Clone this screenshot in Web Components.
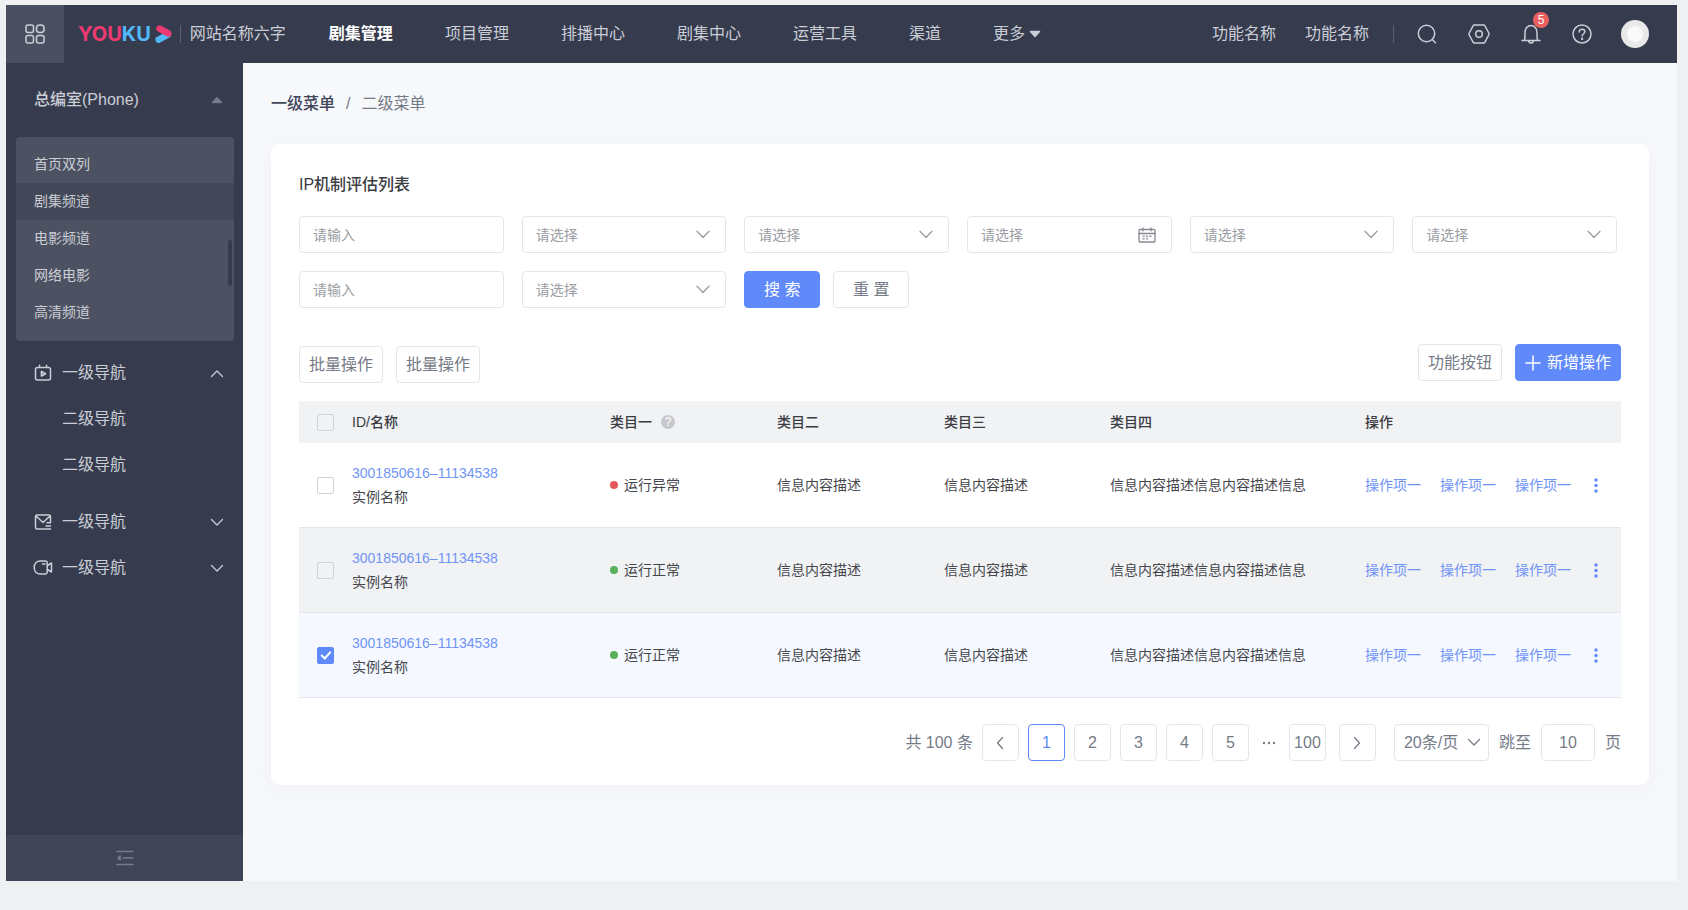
<!DOCTYPE html>
<html lang="zh-CN">
<head>
<meta charset="utf-8">
<meta name="viewport" content="width=device-width, initial-scale=1">
<title>IP机制评估列表</title>
<style>
  :root {
    --dark: #363b4e;
    --ink: #45474d;
    --muted: #767b88;
    --hint: #9b9da4;
    --line: #e4e6ed;
    --blue: #608afa;
    --link: #7094f6;
    --fill: #f1f2f4;
    --on-dark: #cbced6;
  }
  body {
    margin: 0;
    background: #eef0f2;
    color: var(--ink);
    font: 16px/24px "Liberation Sans", "Noto Sans CJK SC", sans-serif;
  }
</style>
</head>
<body>
<yk-app></yk-app>

<script>
const define = (name, html, setup) => {
  const tpl = document.createElement('template');
  tpl.innerHTML = html;
  customElements.define(name, class extends HTMLElement {
    connectedCallback() {
      if (this.shadowRoot) return;
      this.attachShadow({ mode: 'open' }).append(tpl.content.cloneNode(true));
      if (setup) setup(this, this.shadowRoot);
    }
  });
};

const ICONS = {
  apps: [20, 20, '<rect x="1" y="1" width="7.5" height="7.5" rx="2"/><rect x="11.5" y="1" width="7.5" height="7.5" rx="3"/><rect x="1" y="11.5" width="7.5" height="7.5" rx="2"/><rect x="11.5" y="11.5" width="7.5" height="7.5" rx="2"/>'],
  play: [18, 18, '<path d="M3.6 14.6 12.5 10" stroke="#52b9f9" stroke-width="6.400"/><path d="M4.600 3.600 13.200 8.300" stroke="#ee3a72" stroke-width="6.600"/>'],
  search: [20, 20, '<circle cx="9.5" cy="9.5" r="8.2"/><path d="m15.5 15.8 3 3"/>'],
  hex: [22, 20, '<path d="M6.2 1h9.6c.5 0 .8.2 1 .6l4 7.4c.3.6.3 1.300 0 2l-4 7.400c-.2.4-.5.600-1 .600H6.200c-.5 0-.8-.2-1-.600l-4-7.400a2 2 0 0 1 0-2l4-7.400c.2-.4.5-.600 1-.600Z"/><circle cx="11" cy="10" r="3.300"/>'],
  bell: [20, 20, '<path d="M1 16.500h18M3.500 16.500c.6-2 .5-4.500.5-8C4 4.500 6.500 1.500 10 1.500s6 3 6 7c0 3.500-.1 6 .5 8M7.500 17c.4 1.400 1.300 2 2.500 2s2.100-.6 2.500-2"/>'],
  help: [20, 20, '<circle cx="10" cy="10" r="9"/><path d="M7.200 8c0-1.700 1.200-2.800 2.800-2.800s2.800 1 2.800 2.500c0 2-2.600 2.200-2.600 4.400"/><circle cx="10.100" cy="14.700" r=".5" fill="currentColor"/>'],
  tri: [12, 8, '<path d="M1.500 1.500h9L6 6.500Z" fill="currentColor"/>'],
  triUp: [12, 8, '<path d="M1.500 6.500h9L6 1.800Z" fill="currentColor"/>'],
  down: [14, 9, '<path d="M1 1.200 7 7.500l6-6.300"/>'],
  up: [14, 9, '<path d="M1.500 7.500 7 2l5.500 5.500"/>'],
  navDown: [14, 9, '<path d="M1.500 1.500 7 7l5.500-5.500"/>'],
  left: [10, 14, '<path d="M7.500 1.500 2.500 7l5 5.500"/>'],
  right: [10, 14, '<path d="m2.500 1.500 5 5.500-5 5.500"/>'],
  tv: [18, 18, '<rect x="1.500" y="3.500" width="15" height="12.500" rx="2"/><path d="M5.500 1.200v2M12.500 1.200v2"/><path d="M7.500 7.500v4.500l4-2.200Z" stroke-width="1.700"/>'],
  mail: [18, 18, '<path d="M16.500 9V3.500a1.500 1.500 0 0 0-1.500-1.500H3a1.500 1.500 0 0 0-1.500 1.500v11A1.500 1.500 0 0 0 3 16h13.500M2 3l7 6.500L16 3M13 9.800h3.500M12 13h4.500"/>'],
  cam: [20, 18, '<path d="M12.500 2H7.500C3.500 2 1.200 4.800 1.200 8.500S3.500 15 7.500 15h5c1 0 1.700-.7 1.700-1.700V3.700c0-1-.7-1.700-1.700-1.700ZM14.500 6.500l4-2.500v9l-4-2.500M9.500 5h2.500"/>'],
  fold: [18, 18, '<path d="M1 2.500h16M7 9h10M1 15.500h16"/><path d="M4 6.800 1.500 9 4 11.200Z" fill="currentColor" stroke-width="1"/>'],
  cal: [18, 16, '<rect x="1" y="2.500" width="16" height="12.500" rx="1"/><path d="M1 6.500h16M5 .8v3M13 .8v3"/><path d="M5 9.200h1.200M8.400 9.200h1.200M11.800 9.200H13M5 11.800h1.200M8.400 11.800h1.200" />'],
  plus: [16, 16, '<path d="M8 1v14M1 8h14"/>'],
  more: [4, 16, '<g fill="currentColor" stroke="none"><circle cx="2" cy="3" r="1.700"/><circle cx="2" cy="8.500" r="1.700"/><circle cx="2" cy="14" r="1.700"/></g>'],
  dots: [14, 4, '<g fill="currentColor" stroke="none"><circle cx="2" cy="2" r="1.200"/><circle cx="7" cy="2" r="1.200"/><circle cx="12" cy="2" r="1.200"/></g>']
};

define('yk-icon', `<style>:host{display:inline-flex;flex:none}svg{display:block}</style>`, (host, root) => {
  const [w, h, body] = ICONS[host.getAttribute('name')];
  const sw = host.getAttribute('weight') || '1.5';
  root.innerHTML += `<svg width="${w}" height="${h}" viewBox="0 0 ${w} ${h}" fill="none" stroke="currentColor" stroke-width="${sw}" stroke-linecap="round" stroke-linejoin="round" aria-hidden="true">${body}</svg>`;
});

define('yk-button', `
<style>
  :host { display: inline-flex; }
  button {
    flex: 1; display: flex; align-items: center; justify-content: center; gap: 6px;
    height: 37px; padding: 0 9px; margin: 0; box-sizing: border-box;
    border: 1px solid var(--line); border-radius: 4px; background: #fff;
    color: var(--muted); font: inherit; white-space: nowrap; cursor: pointer;
  }
  :host([primary]) button { background: var(--blue); border-color: var(--blue); color: #fff; }
  :host([wide]) button { padding: 0 18px; }
</style>
<button type="button"><slot></slot></button>`);

define('yk-field', `
<style>
  :host { display: block; position: relative; color: var(--hint); font-size: 14px; }
  input, select {
    display: block; width: 100%; height: 37px; box-sizing: border-box; margin: 0; padding: 0 40px 0 13px;
    border: 1px solid var(--line); border-radius: 4px; background: #fff; outline: none;
    color: inherit; font: inherit; appearance: none;
  }
  input::placeholder { color: inherit; opacity: 1; }
  yk-icon { position: absolute; right: 16px; top: 0; height: 37px; align-items: center; pointer-events: none; }
</style>`, (host, root) => {
  const kind = host.getAttribute('kind');
  const label = host.getAttribute('label');
  const hint = kind === 'text' ? '请输入' : '请选择';
  const holder = document.createElement('template');
  holder.innerHTML = kind === 'select'
    ? `<select aria-label="${label}"><option>${hint}</option></select><yk-icon name="down" weight="1.300"></yk-icon>`
    : `<input type="text" aria-label="${label}" placeholder="${hint}">` +
      (kind === 'date' ? '<yk-icon name="cal" weight="1.300" style="color:#868994"></yk-icon>' : '');
  root.append(holder.content);
});

define('yk-header', `
<style>
  :host { display: flex; align-items: center; height: 58px; background: var(--dark); color: var(--on-dark); white-space: nowrap; }
  a { color: inherit; text-decoration: none; }
  button { all: unset; display: flex; cursor: pointer; position: relative; }
  .apps { width: 58px; height: 58px; background: #4a5061; align-items: center; justify-content: center; flex: none; }
  .logo { display: flex; align-items: center; gap: 4px; margin-left: 14px; font: 700 20px/24px Inter, sans-serif; color: #ee3a72; }
  .logo b { font-weight: inherit; color: #52b9f9; }
  .bar { width: 1px; height: 18px; background: #5b6070; }
  .bar.first { margin: 0 9px 0 7px; }
  nav { display: flex; gap: 52px; margin-left: 43px; flex: 1; }
  nav a { display: flex; align-items: center; gap: 4px; }
  nav .on { color: #fff; font-weight: 700; }
  .tools { display: flex; align-items: center; gap: 29px; margin-right: 28px; }
  .icons { display: flex; align-items: center; gap: 31px; margin-left: -1px; }
  .tools .bar { margin: 0 -5px; }
  .badge {
    position: absolute; left: 12px; top: -12px; width: 16px; height: 16px; border-radius: 50%;
    background: #ea6060; color: #fff; font-size: 12px; line-height: 16px; text-align: center;
  }
  .me { width: 28px; height: 28px; border-radius: 50%; background: radial-gradient(circle, #fafafa 0 7px, #e9e9ea 9px 100%); }
</style>
<button class="apps" type="button" aria-label="应用"><yk-icon name="apps"></yk-icon></button>
<a class="logo" href="#"><span>YOU<b>KU</b></span><yk-icon name="play"></yk-icon></a>
<span class="bar first"></span>
<span>网站名称六字</span>
<nav>
  <a class="on" href="#">剧集管理</a><a href="#">项目管理</a><a href="#">排播中心</a><a href="#">剧集中心</a>
  <a href="#">运营工具</a><a href="#">渠道</a><a href="#">更多<yk-icon name="tri"></yk-icon></a>
</nav>
<div class="tools">
  <a href="#">功能名称</a><a href="#">功能名称</a>
  <span class="bar"></span>
  <div class="icons">
    <button type="button" aria-label="搜索"><yk-icon name="search"></yk-icon></button>
    <button type="button" aria-label="设置"><yk-icon name="hex"></yk-icon></button>
    <button type="button" aria-label="通知"><yk-icon name="bell"></yk-icon><span class="badge">5</span></button>
    <button type="button" aria-label="帮助"><yk-icon name="help"></yk-icon></button>
  </div>
  <button class="me" type="button" aria-label="账号"></button>
</div>`);

define('yk-nav-item', `
<style>
  :host { display: block; }
  a { display: flex; align-items: center; height: 46px; padding: 0 19px 0 28px; color: inherit; text-decoration: none; }
  .icon { width: 20px; display: flex; justify-content: center; margin: 0 8px 0 -1px; }
  .text { flex: 1; margin-left: 1px; }
  :host([sub]) .text { margin-left: 28px; }
</style>
<a href="#"></a>`, (host, root) => {
  const icon = host.getAttribute('icon'), arrow = host.getAttribute('arrow');
  root.querySelector('a').innerHTML =
    (icon ? `<span class="icon"><yk-icon name="${icon}"></yk-icon></span>` : '') +
    '<span class="text"><slot></slot></span>' +
    (arrow ? `<yk-icon name="${arrow}" weight="1.300"></yk-icon>` : '');
});

define('yk-sidebar', `
<style>
  :host { display: flex; flex-direction: column; background: var(--dark); color: var(--on-dark); }
  .head { all: unset; display: flex; align-items: center; justify-content: space-between; height: 74px; padding: 0 20px 0 28px; font-weight: 500; cursor: pointer; }
  .head yk-icon { color: #767b8b; }
  .list { position: relative; margin: 0 9px 9px 10px; padding: 9px 0 10px; border-radius: 4px; background: #4d5262; font-size: 14px; }
  .list a { display: block; padding-left: 18px; line-height: 37px; color: inherit; text-decoration: none; }
  .list a.on { background: #434858; }
  .thumb { position: absolute; right: 2px; top: 103px; width: 4px; height: 46px; border-radius: 2px; background: #363b4e; }
  nav { flex: 1; }
  .group { margin-bottom: 11px; }
  .fold { all: unset; display: flex; align-items: center; justify-content: center; height: 46px; background: #404457; color: #777c8c; cursor: pointer; }
</style>
<button class="head" type="button">总编室(Phone)<yk-icon name="triUp"></yk-icon></button>
<div class="list">
  <a href="#">首页双列</a><a class="on" href="#">剧集频道</a><a href="#">电影频道</a><a href="#">网络电影</a><a href="#">高清频道</a>
  <span class="thumb"></span>
</div>
<nav>
  <div class="group">
    <yk-nav-item icon="tv" arrow="up">一级导航</yk-nav-item>
    <yk-nav-item sub>二级导航</yk-nav-item>
    <yk-nav-item sub>二级导航</yk-nav-item>
  </div>
  <yk-nav-item icon="mail" arrow="navDown">一级导航</yk-nav-item>
  <yk-nav-item icon="cam" arrow="navDown">一级导航</yk-nav-item>
</nav>
<button class="fold" type="button" aria-label="收起导航"><yk-icon name="fold"></yk-icon></button>`);

define('yk-check', `
<style>
  :host { display: block; width: 17px; height: 17px; }
  input {
    appearance: none; display: block; position: relative; width: 17px; height: 17px; margin: 0; box-sizing: border-box;
    border: 1px solid #d0d2da; border-radius: 2px; background: transparent;
  }
  input:checked { background: var(--blue); border-color: var(--blue); }
  input:checked::after {
    content: ""; position: absolute; left: 5px; top: 1px; width: 4px; height: 8px;
    border: solid #fff; border-width: 0 2px 2px 0; transform: rotate(42deg);
  }
</style>
<input type="checkbox">`, (host, root) => {
  const box = root.querySelector('input');
  box.checked = host.hasAttribute('checked');
  box.setAttribute('aria-label', host.getAttribute('label'));
});

define('yk-table', `
<style>
  :host { display: block; font-size: 14px; }
  table { width: 100%; table-layout: fixed; border-collapse: separate; border-spacing: 0; }
  th { height: 42px; padding: 0; background: var(--fill); text-align: left; font-weight: 500; color: #3a3c42; }
  td { height: 84px; padding: 0; border-bottom: 1px solid var(--line); white-space: nowrap; }
  tr.hover td { background: var(--fill); }
  tr.picked td { background: #f5f9ff; }
  th:first-child, td:first-child { padding-left: 18px; }
  a { color: var(--link); text-decoration: none; }
  .id { display: block; }
  .q { display: inline-block; width: 14px; height: 14px; margin-left: 9px; border-radius: 50%; background: #c6c8cc; color: #fff; font-size: 12px; line-height: 14px; text-align: center; vertical-align: 1px; }
  .state { display: flex; align-items: center; gap: 6px; }
  .state::before { content: ""; width: 8px; height: 8px; border-radius: 50%; background: #59b15c; }
  .state.bad::before { background: #e4585b; }
  .ops { display: flex; align-items: center; gap: 19px; }
  .ops button { all: unset; display: flex; color: var(--blue); margin-left: 4px; cursor: pointer; }
</style>
<table>
  <colgroup>
    <col style="width:53px"><col style="width:258px"><col style="width:167px"><col style="width:167px">
    <col style="width:166px"><col style="width:255px"><col style="width:256px">
  </colgroup>
  <thead><tr>
    <th><yk-check label="全选"></yk-check></th><th>ID/名称</th><th>类目一<span class="q">?</span></th>
    <th>类目二</th><th>类目三</th><th>类目四</th><th>操作</th>
  </tr></thead>
  <tbody></tbody>
</table>`, (host, root) => {
  const rows = [
    { state: '运行异常', bad: true, cls: '' },
    { state: '运行正常', cls: 'hover' },
    { state: '运行正常', cls: 'picked' }
  ];
  root.querySelector('tbody').innerHTML = rows.map(r => `
    <tr class="${r.cls}">
      <td><yk-check label="选择实例"${r.cls === 'picked' ? ' checked' : ''}></yk-check></td>
      <td><a class="id" href="#">3001850616–11134538</a>实例名称</td>
      <td><span class="state${r.bad ? ' bad' : ''}">${r.state}</span></td>
      <td>信息内容描述</td><td>信息内容描述</td><td>信息内容描述信息内容描述信息</td>
      <td><div class="ops"><a href="#">操作项一</a><a href="#">操作项一</a><a href="#">操作项一</a><button type="button" aria-label="更多操作"><yk-icon name="more"></yk-icon></button></div></td>
    </tr>`).join('');
});

define('yk-pagination', `
<style>
  :host { display: flex; align-items: center; justify-content: flex-end; gap: 9px; color: var(--muted); white-space: nowrap; }
  button, select, input {
    box-sizing: border-box; height: 37px; margin: 0; padding: 0; border: 1px solid var(--line); border-radius: 4px;
    background: #fff; color: inherit; font: inherit; text-align: center; appearance: none; outline: none;
  }
  button { width: 37px; display: flex; align-items: center; justify-content: center; cursor: pointer; }
  button.on { border-color: var(--blue); color: var(--blue); }
  .pages { display: flex; gap: 9px; }
  .rest, .jump { display: flex; align-items: center; }
  .rest { gap: 13px; margin-left: 4px; }
  .jump { gap: 10px; margin-left: 9px; }
  .size { position: relative; display: flex; }
  .size select { width: 95px; padding-left: 9px; text-align: left; }
  .size yk-icon { position: absolute; right: 8px; top: 0; height: 37px; align-items: center; pointer-events: none; }
  input { width: 54px; }
</style>
<span>共 100 条</span>
<div class="pages">
  <button type="button" aria-label="上一页"><yk-icon name="left" weight="1.300"></yk-icon></button>
  <button class="on" type="button">1</button><button type="button">2</button><button type="button">3</button>
  <button type="button">4</button><button type="button">5</button>
</div>
<div class="rest">
  <yk-icon name="dots"></yk-icon>
  <button type="button">100</button>
  <button type="button" aria-label="下一页"><yk-icon name="right" weight="1.300"></yk-icon></button>
</div>
<div class="jump">
  <span class="size"><select aria-label="每页条数"><option>20条/页</option></select><yk-icon name="navDown" weight="1.300"></yk-icon></span>
  <label for="page">跳至</label>
  <input id="page" type="text" value="10">
  <span>页</span>
</div>`);

define('yk-card', `
<style>
  :host { display: block; padding: 29px 28px 24px; border-radius: 8px; background: #fff; box-shadow: 0 4px 20px rgba(90, 110, 160, .05); }
  h1 { margin: 0 0 19px; font-size: 16px; line-height: 24px; font-weight: 500; color: #3a3c42; }
</style>
<h1><slot name="title"></slot></h1>
<slot></slot>`);

define('yk-app', `
<style>
  :host { display: flex; flex-direction: column; min-height: 100vh; box-sizing: border-box; padding: 5px 11px 29px 6px; }
  .body { flex: 1; display: grid; grid-template-columns: 237px minmax(0, 1fr); background: #f7f8fa; }
  main { padding: 29px 28px 28px; }
  .crumb { display: flex; gap: 11px; margin-bottom: 28px; color: var(--muted); }
  .crumb a { color: inherit; text-decoration: none; }
  .crumb a:first-child { color: #41465a; font-weight: 500; }
  form { display: grid; grid-template-columns: repeat(6, minmax(0, 1fr)); gap: 18px; margin-right: 4px; }
  .acts { display: flex; gap: 13px; }
  .acts yk-button { min-width: 76px; }
  .bar { display: flex; justify-content: space-between; height: 39px; margin: 36px 0 18px; }
  .bar div { display: flex; gap: 13px; align-items: flex-start; }
  .bar div:first-child { align-items: flex-end; }
  yk-pagination { margin-top: 26px; }
</style>
<yk-header></yk-header>
<div class="body">
  <yk-sidebar></yk-sidebar>
  <main>
    <div class="crumb"><a href="#">一级菜单</a><span>/</span><a href="#">二级菜单</a></div>
    <yk-card>
      <span slot="title">IP机制评估列表</span>
      <form>
        <yk-field kind="text" label="条件一"></yk-field>
        <yk-field kind="select" label="条件二"></yk-field>
        <yk-field kind="select" label="条件三"></yk-field>
        <yk-field kind="date" label="日期"></yk-field>
        <yk-field kind="select" label="条件五"></yk-field>
        <yk-field kind="select" label="条件六"></yk-field>
        <yk-field kind="text" label="条件七"></yk-field>
        <yk-field kind="select" label="条件八"></yk-field>
        <div class="acts"><yk-button primary wide>搜 索</yk-button><yk-button wide>重 置</yk-button></div>
      </form>
      <div class="bar">
        <div><yk-button>批量操作</yk-button><yk-button>批量操作</yk-button></div>
        <div><yk-button>功能按钮</yk-button><yk-button primary><yk-icon name="plus"></yk-icon>新增操作</yk-button></div>
      </div>
      <yk-table></yk-table>
      <yk-pagination></yk-pagination>
    </yk-card>
  </main>
</div>`);
</script>
</body>
</html>
